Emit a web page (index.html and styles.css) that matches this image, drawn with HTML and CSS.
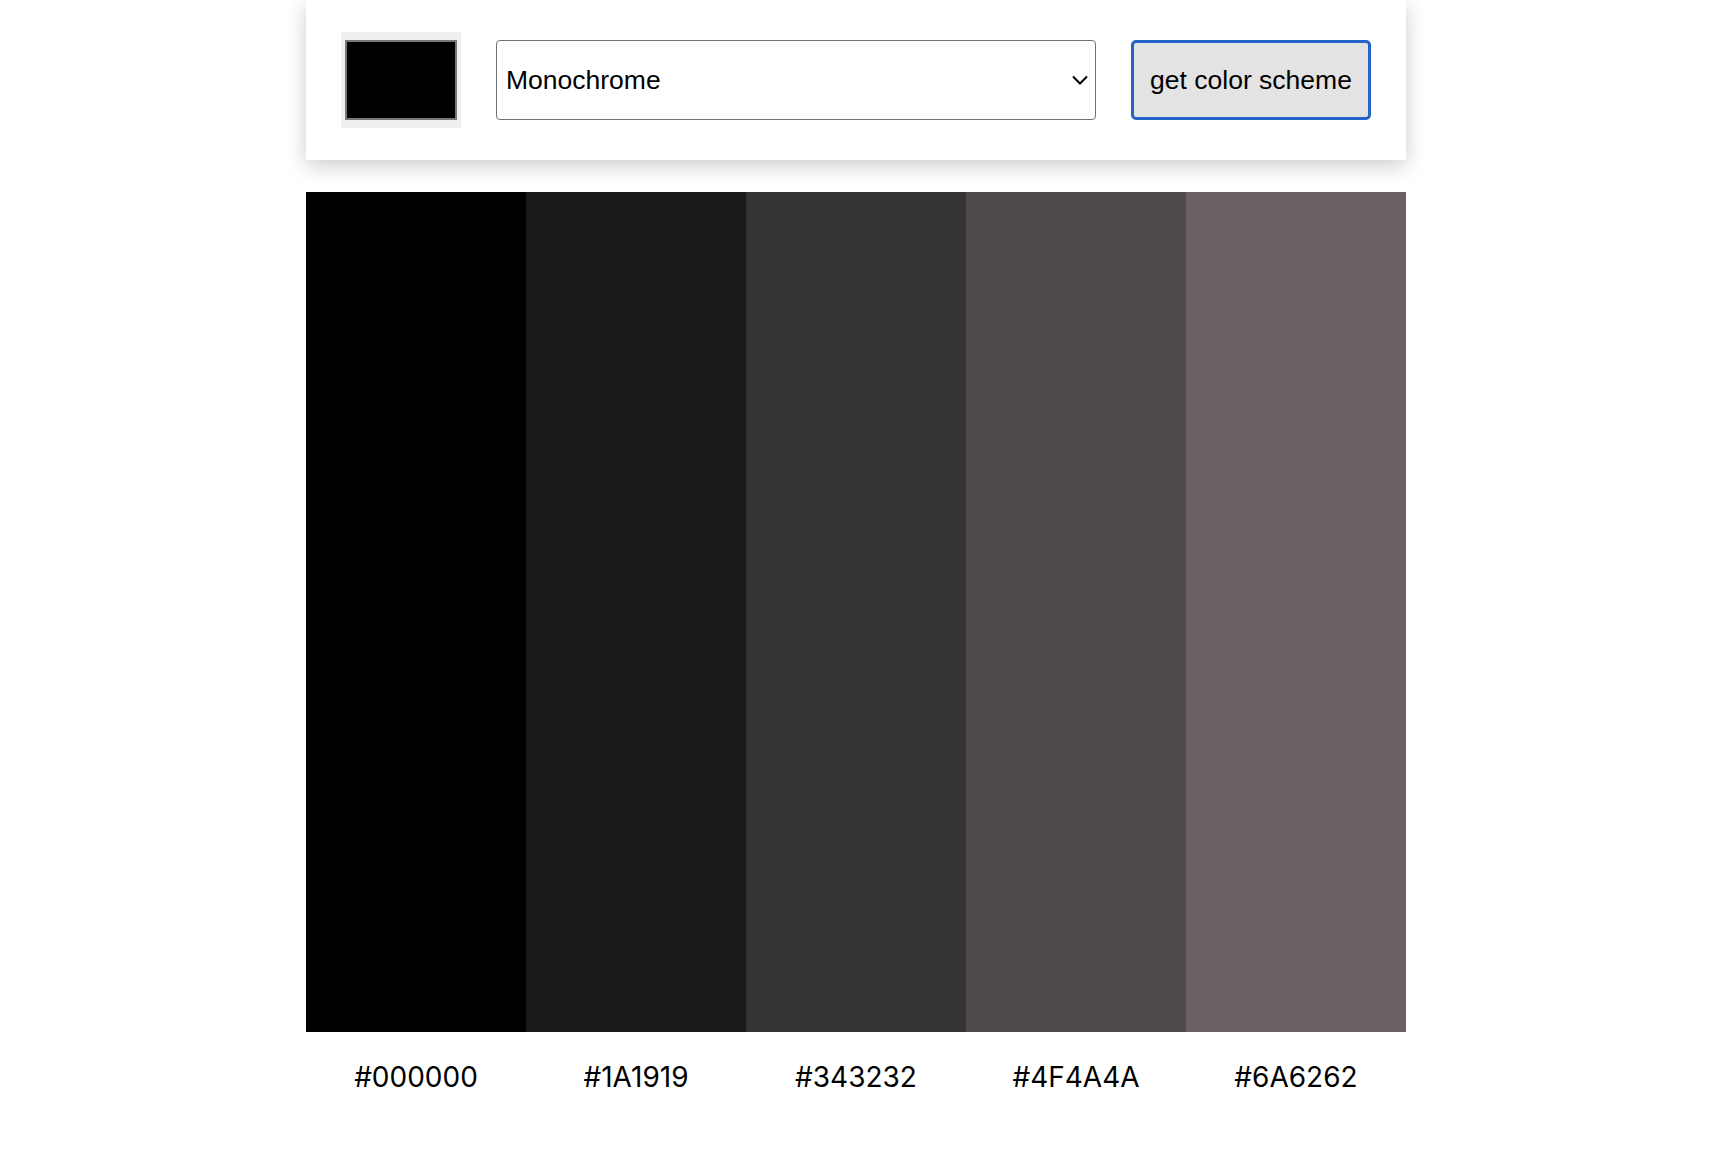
FILE: index.html
```html
<!DOCTYPE html>
<html lang="en">
<head>
<meta charset="utf-8">
<title>Color Scheme</title>
<link rel="stylesheet" href="styles.css">
</head>
<body>
<main class="app">
  <header class="controls">
    <input class="picker" type="color" value="#000000" aria-label="seed color">
    <div class="select-wrap">
      <select class="mode">
        <option>Monochrome</option>
        <option>Monochrome-dark</option>
        <option>Monochrome-light</option>
        <option>Analogic</option>
        <option>Complement</option>
        <option>Analogic-complement</option>
        <option>Triad</option>
        <option>Quad</option>
      </select>
      <svg class="chevron" width="16" height="10" viewBox="0 0 16 10" aria-hidden="true"><path d="M1 1.5 L8 8.5 L15 1.5" fill="none" stroke="#000" stroke-width="2"/></svg>
    </div>
    <button class="get-btn" type="button">get color scheme</button>
  </header>
  <section class="palette">
    <div class="col"><div class="swatch" style="background:#000000"></div><p class="hex">#000000</p></div>
    <div class="col"><div class="swatch" style="background:#1A1919"></div><p class="hex">#1A1919</p></div>
    <div class="col"><div class="swatch" style="background:#343232"></div><p class="hex">#343232</p></div>
    <div class="col"><div class="swatch" style="background:#4F4A4A"></div><p class="hex">#4F4A4A</p></div>
    <div class="col"><div class="swatch" style="background:#6A6262"></div><p class="hex">#6A6262</p></div>
  </section>
</main>
</body>
</html>
```
FILE: styles.css
```css
html, body {
  margin: 0;
  background: #ffffff;
}
body {
  padding-right: 8px;
  font-family: "Liberation Sans", Arial, sans-serif;
}
.app {
  width: 1100px;
  margin: 0 auto;
}
.controls {
  height: 160px;
  display: flex;
  align-items: center;
  justify-content: space-evenly;
  background: #ffffff;
  box-shadow: 0 6px 20px rgba(0, 0, 0, 0.2);
}
.picker {
  -webkit-appearance: none;
  appearance: none;
  width: 120px;
  height: 96px;
  margin: 0;
  padding: 0;
  border: none;
  background: #efefef;
  cursor: pointer;
}
.picker::-webkit-color-swatch-wrapper {
  padding: 8px 4px;
}
.picker::-webkit-color-swatch {
  border: 2px solid #777777;
  border-radius: 0;
}
.select-wrap {
  position: relative;
  width: 600px;
  height: 80px;
}
.mode {
  -webkit-appearance: none;
  appearance: none;
  width: 100%;
  height: 100%;
  margin: 0;
  padding: 0 40px 0 9px;
  border: 1px solid #727272;
  border-radius: 4px;
  background: #ffffff;
  color: #000;
  font-family: "Liberation Sans", Arial, sans-serif;
  font-size: 26.5px;
}
.chevron {
  position: absolute;
  right: 8px;
  top: 35px;
  pointer-events: none;
}
.get-btn {
  width: 240px;
  height: 80px;
  margin: 0;
  padding: 0;
  border: 3px solid #2563c6;
  border-radius: 5px;
  background: #e3e3e3;
  color: #000;
  font-family: "Liberation Sans", Arial, sans-serif;
  font-size: 26.5px;
  cursor: pointer;
}
.palette {
  display: grid;
  grid-template-columns: repeat(5, 1fr);
  margin-top: 32px;
}
.col {
  display: flex;
  flex-direction: column;
}
.swatch {
  height: 840px;
}
.hex {
  margin: 28px 0 0;
  text-align: center;
  font-family: Inter, "Liberation Sans", sans-serif;
  font-size: 28px;
  line-height: normal;
  color: #000;
}
```
